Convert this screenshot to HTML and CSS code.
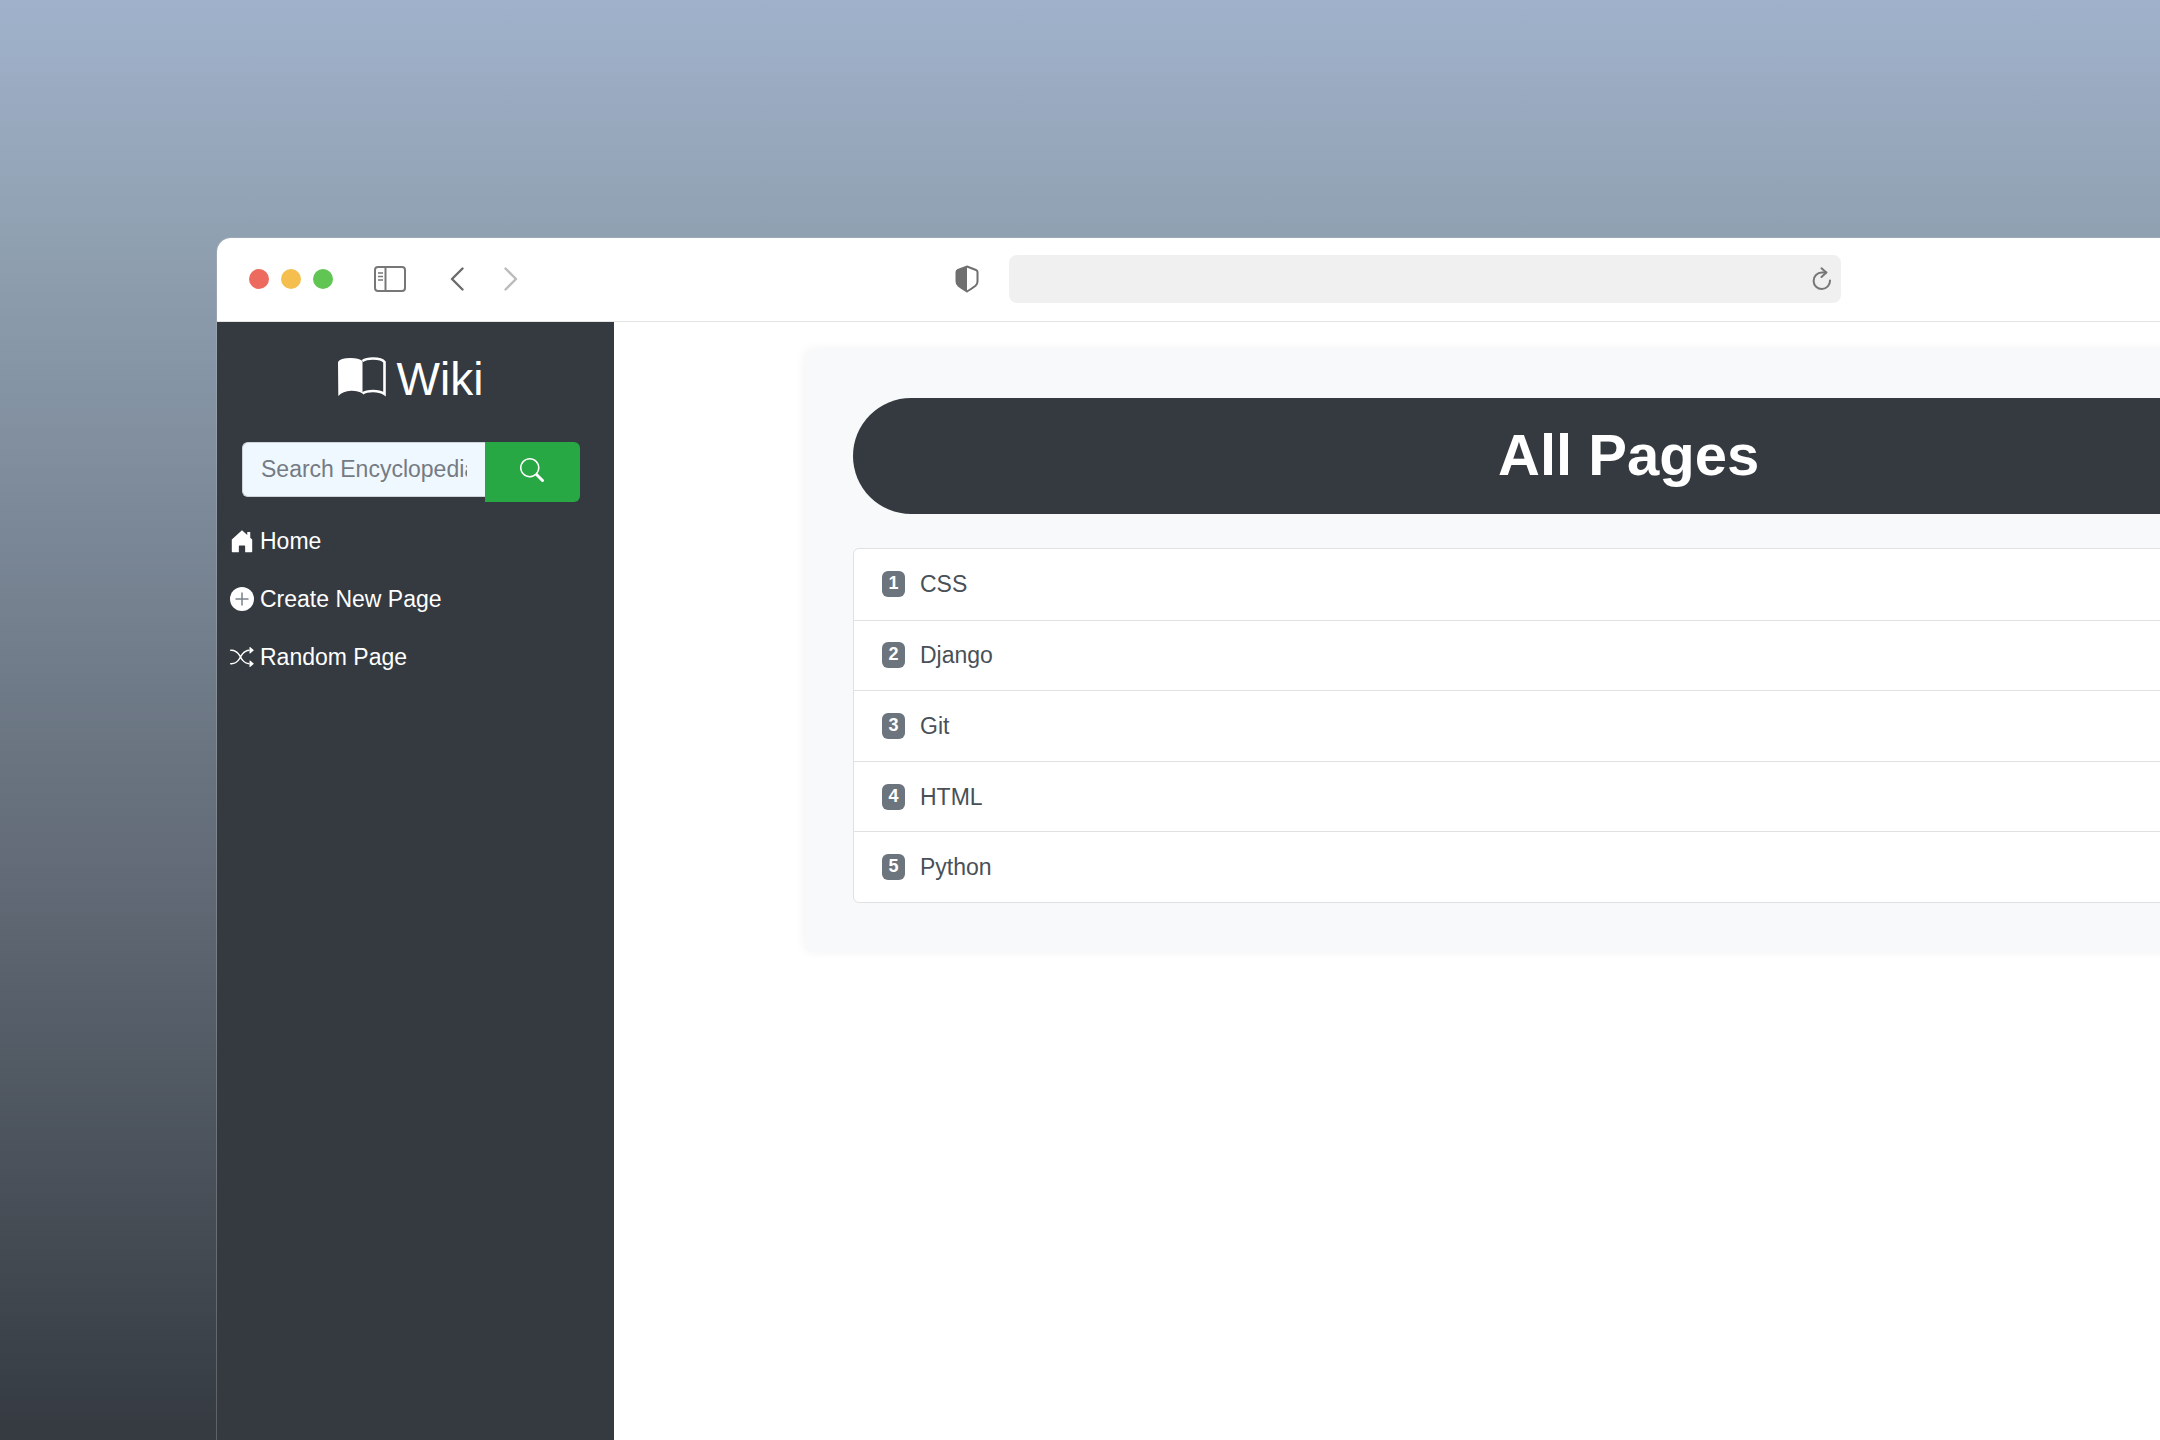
FILE: index.html
```html
<!DOCTYPE html>
<html lang="en">
<head>
<meta charset="utf-8">
<title>Wiki - All Pages</title>
<link rel="stylesheet" href="styles.css">
</head>
<body>
<div class="window">
  <header class="toolbar">
    <div class="tools">
      <div class="lights"><span class="light red"></span><span class="light yellow"></span><span class="light green"></span></div>
      <button class="tool panel" aria-label="Toggle sidebar">
        <svg width="32" height="26" viewBox="0 0 32 26" fill="none" stroke="#777" stroke-width="2"><rect x="1" y="1" width="30" height="24" rx="3"/><path d="M11.500 1v24"/><path d="M4 7h5M4 10.500h5M4 14h5" stroke-width="1.500"/></svg>
      </button>
      <button class="tool back" aria-label="Back">
        <svg width="14" height="24" viewBox="0 0 14 24" fill="none" stroke="#6b6b6b" stroke-width="2.400" stroke-linecap="round" stroke-linejoin="round"><path d="M12.500 1.500 2 12l10.500 10.500"/></svg>
      </button>
      <button class="tool forward" aria-label="Forward">
        <svg width="14" height="24" viewBox="0 0 14 24" fill="none" stroke="#bbb" stroke-width="2.400" stroke-linecap="round" stroke-linejoin="round"><path d="M1.500 1.500 12 12 1.500 22.500"/></svg>
      </button>
      <button class="tool shield" aria-label="Privacy report">
        <svg width="24" height="28" viewBox="0 0 24 28" fill="none" stroke="#6f6f6f" stroke-width="2"><path d="M12 1.500 21 5q1.500.600 1.500 2v9.500q0 2.500-2 4.200Q17 23.500 12 26.500 7 23.500 3.500 20.700q-2-1.700-2-4.200V7q0-1.400 1.500-2z"/><path d="M12 1.500v25Q7 23.500 3.500 20.700q-2-1.700-2-4.200V7q0-1.400 1.500-2z" fill="#6f6f6f" stroke="none"/></svg>
      </button>
    </div>
    <div class="address">
      <input class="url" type="text" aria-label="Address">
      <button class="tool" aria-label="Reload">
        <svg width="20" height="24" viewBox="0 0 20 24" fill="none" stroke="#777" stroke-width="2" stroke-linecap="round" stroke-linejoin="round"><path d="M18 13.500A8.200 8.200 0 1 1 9.800 5.600h4.500"/><path d="M9.500 1.300l4.800 4.300-4.800 4.400"/></svg>
      </button>
    </div>
    <div class="spacer"></div>
  </header>
  <div class="page">
    <aside class="sidebar">
      <div class="brand">
        <svg width="50" height="40" viewBox="0 0 50 40" fill="none"><path d="M1 5Q3 1 13.500 1 22 1 25.500 4v32.500Q21 33.500 14 33.700 6 34 1.300 39z" fill="#fff"/><path d="M25.500 4Q29 1.500 36 1.500 45 1.500 47.500 5v32Q43 34 36 34q-7 0-10.500 2.500" stroke="#fff" stroke-width="2.600"/></svg>
        <span>Wiki</span>
      </div>
      <form class="search">
        <input class="query" type="text" aria-label="Search Encyclopedia" placeholder="Search Encyclopedia">
        <button class="go" type="button" aria-label="Search">
          <svg width="24" height="24" viewBox="0 0 16 16" fill="#fff"><path d="M11.742 10.344a6.500 6.500 0 1 0-1.397 1.398h-.001c.030.040.062.078.098.115l3.850 3.850a1 1 0 0 0 1.415-1.414l-3.850-3.850a1.007 1.007 0 0 0-.115-.100zM12 6.500a5.500 5.500 0 1 1-11 0 5.500 5.500 0 0 1 11 0z"/></svg>
        </button>
      </form>
      <nav class="nav">
        <a href="#"><svg width="24" height="24" viewBox="0 0 16 16" fill="#fff"><path d="M8 .8 1.200 7v8q0 .5.500.5h4.200v-4q0-.5.500-.5h3.200q.5 0 .5.500v4h4.200q.5 0 .5-.5V7l-1.300-1.200V2h-2v2z"/></svg>Home</a>
        <a href="#"><svg width="24" height="24" viewBox="0 0 16 16"><circle cx="8" cy="8" r="8" fill="#fff"/><path d="M8 4v8M4 8h8" stroke="#7b8187" stroke-width="1" stroke-linecap="round"/></svg>Create New Page</a>
        <a href="#"><svg width="24" height="24" viewBox="0 0 16 16" fill="#fff"><path fill-rule="evenodd" d="M0 3.500A.5.5 0 0 1 .5 3H1c2.202 0 3.827 1.240 4.874 2.418.490.552.865 1.102 1.126 1.532.260-.430.636-.980 1.126-1.532C9.173 4.240 10.798 3 13 3v1c-1.798 0-3.173 1.010-4.126 2.082A9.624 9.624 0 0 0 7.556 8a9.624 9.624 0 0 0 1.317 1.918C9.828 10.990 11.204 12 13 12v1c-2.202 0-3.827-1.240-4.874-2.418A10.595 10.595 0 0 1 7 9.050c-.260.430-.636.980-1.126 1.532C4.827 11.760 3.202 13 1 13H.5a.5.5 0 0 1 0-1H1c1.798 0 3.173-1.010 4.126-2.082A9.624 9.624 0 0 0 6.444 8a9.624 9.624 0 0 0-1.317-1.918C4.172 5.010 2.796 4 1 4H.5a.5.5 0 0 1-.5-.5z"/><path d="M13 5.466V1.534a.250.250 0 0 1 .410-.192l2.360 1.966c.120.100.120.284 0 .384l-2.360 1.966a.250.250 0 0 1-.410-.192zm0 9v-3.932a.250.250 0 0 1 .410-.192l2.360 1.966c.120.100.120.284 0 .384l-2.360 1.966a.250.250 0 0 1-.410-.192z"/></svg>Random Page</a>
      </nav>
    </aside>
    <main class="main">
      <section class="card">
        <h1 class="title">All Pages</h1>
        <div class="list">
          <a href="#"><span class="badge">1</span>CSS</a>
          <a href="#"><span class="badge">2</span>Django</a>
          <a href="#"><span class="badge">3</span>Git</a>
          <a href="#"><span class="badge">4</span>HTML</a>
          <a href="#"><span class="badge">5</span>Python</a>
        </div>
      </section>
    </main>
  </div>
</div>
</body>
</html>
```

FILE: styles.css
```css
* { box-sizing: border-box; }

body {
  display: flex;
  margin: 0;
  height: 100vh;
  overflow: hidden;
  padding: 237px 0 0 10vw;
  background: linear-gradient(#a0b2cb, #90a1b2 16%, #626b77 60%, #343a40);
  font-family: "Liberation Sans", Arial, sans-serif;
  font-size: 23px;
  line-height: 34px;
}

button, input { font: inherit; border: 0; margin: 0; }
svg { display: block; flex: none; }

/* The window runs past the right edge of the desktop. */
.window {
  display: flex;
  flex: none;
  flex-direction: column;
  width: 112vw;
  border: 1px solid rgba(190, 190, 190, .3);
  border-width: 1px 0 0 1px;
  border-radius: 15px 0 0 0;
  background: #fff padding-box;
}

.toolbar {
  display: flex;
  align-items: center;
  height: 84px;
  padding-bottom: 2px;
  border-bottom: 1px solid #e4e4e4;
}
.tools { flex: 1; display: flex; align-items: center; padding: 0 30px 0 32px; }
.lights { display: flex; gap: 12px; }
.light { width: 20px; height: 20px; border-radius: 50%; }
.red { background: #ec6a5e; }
.yellow { background: #f4bf4f; }
.green { background: #61c554; }
.tool { padding: 0; background: none; }
.panel { margin-left: 41px; }
.back { margin-left: 44px; }
.forward { margin-left: 40px; }
.shield { margin-left: auto; }
.address {
  display: flex;
  align-items: center;
  width: 832px;
  height: 48px;
  padding-right: 9px;
  border-radius: 8px;
  background: #f0f0f0;
}
.url { flex: 1; background: none; }
.spacer { flex: 1; padding: 0 32px; }

.page { flex: 1; display: flex; }
.sidebar { width: 397px; background: #343a40; color: #fff; }
.brand {
  display: flex;
  align-items: center;
  justify-content: center;
  gap: 10px;
  padding: 21px 36px 27px 25px;
  font-size: 46px;
  line-height: 72px;
}
.brand svg { margin-top: -4px; }
.search { display: flex; align-items: flex-start; padding: 0 34px 0 25px; }
.query {
  flex: 1;
  min-width: 0;
  height: 55px;
  padding: 0 18px;
  border: 1px solid #ced4da;
  border-right: 0;
  border-radius: 6px 0 0 6px;
  background: #f0f8ff;
}
.query::placeholder { color: #757b84; opacity: 1; }
.go {
  display: flex;
  align-items: center;
  justify-content: center;
  width: 95px;
  height: 60px;
  padding: 0 2px 4px 0;
  border-radius: 0 6px 6px 0;
  background: #28a745;
}
.nav { padding-top: 10px; }
.nav a {
  display: flex;
  align-items: center;
  gap: 6px;
  padding: 12px 13px;
  color: #fff;
  text-decoration: none;
}

.main { flex: 1; padding: 28px 183px 0 191px; }
.card {
  padding: 48px;
  border-radius: 6px;
  background: #f8f9fa;
  box-shadow: 0 0 12px rgba(0, 0, 0, .06);
}
.title {
  margin: 0 0 34px;
  padding-bottom: 2px;
  border-radius: 58px;
  background: #343a40;
  color: #fff;
  font-size: 58px;
  line-height: 114px;
  text-align: center;
}
.list {
  display: grid;
  grid-auto-rows: 1fr;
  min-height: 355px;
  border: 1px solid #dfe1e3;
  border-radius: 6px;
  background: #fff;
}
.list a {
  display: flex;
  align-items: center;
  gap: 15px;
  padding: 0 28px;
  color: #495057;
  text-decoration: none;
}
.list a + a { border-top: 1px solid #dfe1e3; }
.badge {
  width: 23px;
  height: 26px;
  border-radius: 6px;
  background: #6c757d;
  color: #fff;
  font-size: 18px;
  font-weight: 700;
  line-height: 24px;
  text-align: center;
}
```
